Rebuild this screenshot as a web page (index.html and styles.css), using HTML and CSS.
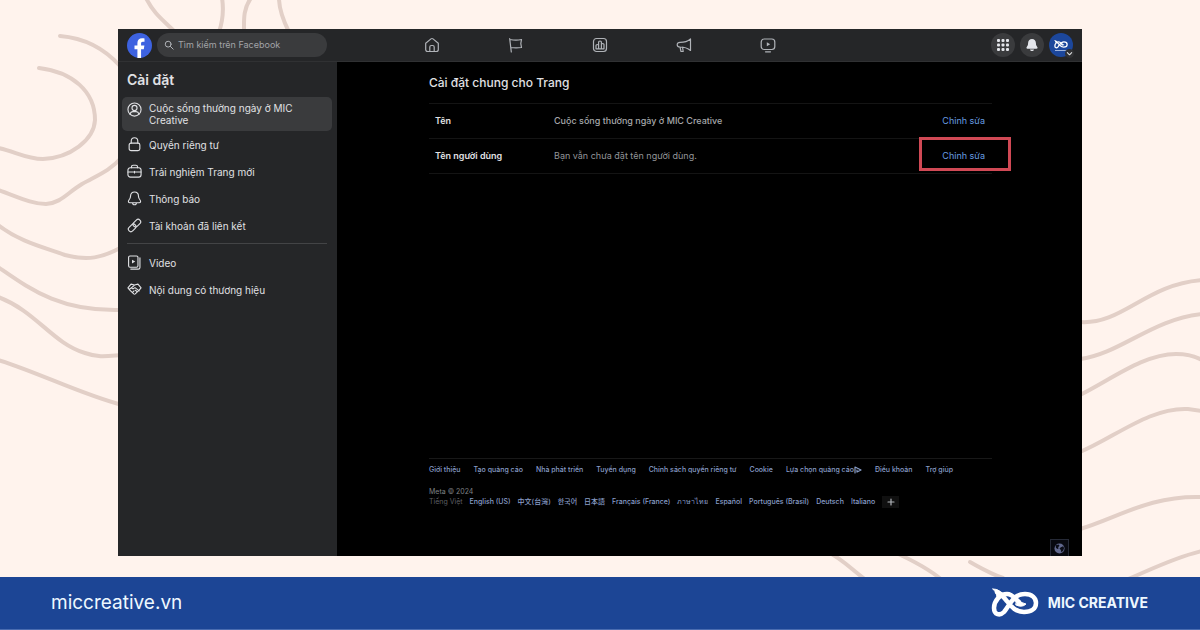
FILE: index.html
```html
<!DOCTYPE html>
<html lang="vi">
<head>
<meta charset="utf-8">
<meta name="viewport" content="width=device-width, initial-scale=1">
<title>Cài đặt chung cho Trang</title>
<link rel="stylesheet" href="styles.css">
</head>
<body>
<svg class="waves" viewBox="0 0 1200 630" preserveAspectRatio="xMidYMid slice" aria-hidden="true">
  <path d="M60 36C84 38 104 48 120 66"/>
  <path d="M39 68C72 72 95 91 95 120C94 140 70 158 43 159C26 159 14 151-2 148"/>
  <path d="M-2 190C16 196 31 204 46 204C61 203 67 193 82 184C98 175 110 171 122 157"/>
  <path d="M-2 225C20 242 43 247 65 255C88 261 102 258 122 247"/>
  <path d="M-2 267C30 289 60 312 122 310"/>
  <path d="M-2 297C36 311 52 343 85 353C99 358 108 356 122 355"/>
  <path d="M-2 360C40 373 80 394 122 405"/>
  <path d="M146-2C154 14 163 20 174 31M222-2C224 10 223 20 219 32M251-2C243 9 244 20 244 32M279-2C279 10 283 20 289 32"/>
  <path d="M1080 322C1122 325 1146 284 1202 280"/>
  <path d="M1080 359C1120 354 1152 319 1202 314"/>
  <path d="M1080 395C1112 379 1144 354 1176 354C1187 354 1195 356 1202 360"/>
  <path d="M1080 452C1114 438 1150 407 1188 409L1202 411"/>
  <path d="M1080 529C1115 519 1150 495 1202 497"/>
  <path d="M1126 580C1150 570 1175 557 1202 551"/>
  <path d="M828 552C842 559 850 568 866 580M894 552C914 561 929 569 942 580M970 562C981 568 989 573 1003 578"/>
</svg>

<div class="window">
  <header class="topbar">
    <div class="topbar-start">
      <a class="logo" href="#" aria-label="Facebook">
        <svg viewBox="0 0 24 24"><circle cx="12" cy="12" r="12" fill="#3d62e0"/><path d="M10 24v-8.500H7.200V12H10V9.600C10 6.500 11.700 5 14.500 5c1 0 1.800.1 2.300.2v3.100h-1.600c-1.300 0-1.700.7-1.700 1.700v2h3.200l-.6 3.500h-2.600V24z" fill="#fff"/></svg>
      </a>
      <label class="search">
        <svg class="line" viewBox="0 0 12 12"><circle cx="5" cy="5" r="3.500"/><path d="M7.700 7.700 11 11"/></svg>
        <input type="search" placeholder="Tìm kiếm trên Facebook" aria-label="Tìm kiếm trên Facebook">
      </label>
    </div>
    <nav class="tabs" aria-label="Chính">
      <a href="#" aria-label="Trang chủ"><svg class="line" viewBox="0 0 16 16"><path d="M1.700 6.300 7 1.900q1-.8 2 0l5.300 4.400v6.200q0 2-2 2H3.700q-2 0-2-2zM5.800 14.500V10q0-1.500 1.500-1.500h1.400q1.500 0 1.500 1.500v4.500"/></svg></a>
      <a href="#" aria-label="Trang"><svg class="line" viewBox="0 0 16 16"><path d="M1.700 1.700 3.300 15M2 2.500q6 1.200 11.500 0l-.7 4 .7 4q-5.500 .8-10.700 0"/></svg></a>
      <a href="#" aria-label="Thống kê"><svg class="line" viewBox="0 0 16 16"><rect x="1.500" y="1.500" width="13" height="13" rx="3"/><path d="M4 11.800V8.500q0-1 1.300-1t1.300 1v3.300zM6.600 11.800V5q0-1 1.400-1t1.400 1v6.800zM9.400 11.800V7.500q0-1 1.300-1t1.300 1v4.300z"/></svg></a>
      <a href="#" aria-label="Quảng cáo"><svg class="line" viewBox="0 0 16 16"><path d="M14.500 2v11.500C11 10.500 8 10 4 10Q1.200 10 1.200 7.700T4 5.400C8 5.400 11 5 14.500 2zM4 10l1 4.500h2.200L6.500 10"/></svg></a>
      <a href="#" aria-label="Video"><svg class="line" viewBox="0 0 16 16"><rect x="1.200" y="2" width="13.600" height="10.500" rx="3"/><path d="M5.500 14.800h5"/><path class="solid" d="m6.800 5.300 3.400 2-3.400 2z"/></svg></a>
    </nav>
    <div class="topbar-end">
      <button class="round" type="button" aria-label="Menu"><svg viewBox="0 0 12 12" fill="#e4e6eb"><rect width="3" height="3" rx="1"/><rect x="4.500" width="3" height="3" rx="1"/><rect x="9" width="3" height="3" rx="1"/><rect y="4.500" width="3" height="3" rx="1"/><rect x="4.500" y="4.500" width="3" height="3" rx="1"/><rect x="9" y="4.500" width="3" height="3" rx="1"/><rect y="9" width="3" height="3" rx="1"/><rect x="4.500" y="9" width="3" height="3" rx="1"/><rect x="9" y="9" width="3" height="3" rx="1"/></svg></button>
      <button class="round" type="button" aria-label="Thông báo"><svg viewBox="0 0 12 12" fill="#e4e6eb"><path d="M6 0C3.500 0 2.100 1.800 2.100 4L1.900 6 .6 8.200C.2 9 .6 9.700 1.500 9.700h9c.9 0 1.300-.7.9-1.500L10.100 6l-.2-2C9.900 1.800 8.500 0 6 0zM4 10.400h4C7.600 12.500 4.400 12.500 4 10.400z"/></svg></button>
      <button class="round avatar" type="button" aria-label="Tài khoản">
        <svg viewBox="0 0 48 30" class="knot"><use href="#knot"/></svg>
        <span class="avatar-line"></span>
        <span class="chevron"><svg class="line" viewBox="0 0 8 8"><path d="m1.500 3 2.500 2.500L6.500 3"/></svg></span>
      </button>
    </div>
  </header>

  <div class="body">
    <aside class="sidebar">
      <h1>Cài đặt</h1>
      <nav aria-label="Cài đặt">
        <ul class="menu">
          <li><a class="active" href="#"><svg class="line" viewBox="0 0 16 16"><circle cx="8" cy="8" r="7"/><circle cx="8" cy="6.300" r="2.700"/><path d="M3.200 13q.8-2.700 3-2.700h3.600q2.200 0 3 2.700"/></svg>Cuộc sống thường ngày ở MIC Creative</a></li>
          <li><a href="#"><svg class="line" viewBox="0 0 16 16"><rect x="2.300" y="6.500" width="11.400" height="8" rx="2"/><path d="M4.500 6.500V4.300a3.500 3.500 0 0 1 7 0v2.200"/></svg>Quyền riêng tư</a></li>
          <li><a href="#"><svg class="line" viewBox="0 0 16 16"><rect x="1" y="4" width="14" height="10" rx="2.500"/><path d="M4.800 4V3q0-1.700 1.700-1.700h3q1.700 0 1.700 1.700v1M1 8.500h14M8 7.800v1.700"/></svg>Trải nghiệm Trang mới</a></li>
          <li><a href="#"><svg class="line" viewBox="0 0 16 16"><path d="M8 1C5.300 1 3.800 3 3.800 5.200q0 2.300-1.700 4.400C1 11.200 1.400 12.500 3 12.500h10c1.600 0 2-1.300.9-2.900q-1.700-2.100-1.700-4.400C12.200 3 10.700 1 8 1zM6 12.500q0 2.200 2 2.200t2-2.200"/></svg>Thông báo</a></li>
          <li><a href="#"><svg class="line" viewBox="0 0 16 16"><rect x="-4.600" y="-2.700" width="9.200" height="5.400" rx="2.700" transform="translate(10.500 5.500) rotate(-45)"/><rect x="-4.600" y="-2.700" width="9.200" height="5.400" rx="2.700" transform="translate(5.500 10.500) rotate(-45)"/></svg>Tài khoản đã liên kết</a></li>
        </ul>
        <ul class="menu menu-more">
          <li><a href="#"><svg class="line" viewBox="0 0 16 16"><rect x="1.700" y="1" width="10" height="12" rx="1.500"/><path d="M13.800 3v10.200q0 1.800-1.800 1.800H4"/><path class="solid" d="m5.300 5 3.500 2-3.500 2z"/></svg>Video</a></li>
          <li><a href="#"><svg class="line" viewBox="0 0 16 16"><path d="m1 6.300 3.300-4L8 3.200l3.700-.9 3.300 4-2 2.400-4.200 4q-.8.700-1.600 0L3 8.700zM8 3.200 5 6q.3 1.800 2.300.8L8.500 6l4.500 3.500M3 7.500l1.500-1.300M9 8.800l2 1.800M6 11l1.500-1.500"/></svg>Nội dung có thương hiệu</a></li>
        </ul>
      </nav>
    </aside>

    <main class="main">
      <section>
        <h2>Cài đặt chung cho Trang</h2>
        <table class="settings">
          <tr><th scope="row">Tên</th><td class="strong">Cuộc sống thường ngày ở MIC Creative</td><td class="edit"><a href="#">Chỉnh sửa</a></td></tr>
          <tr><th scope="row">Tên người dùng</th><td>Bạn vẫn chưa đặt tên người dùng.</td><td class="edit"><a class="marked" href="#">Chỉnh sửa</a></td></tr>
        </table>
      </section>
      <footer class="legal">
        <nav class="links">
          <a href="#">Giới thiệu</a><a href="#">Tạo quảng cáo</a><a href="#">Nhà phát triển</a><a href="#">Tuyển dụng</a><a href="#">Chính sách quyền riêng tư</a><a href="#">Cookie</a><a href="#">Lựa chọn quảng cáo<svg class="line adchoice" viewBox="0 0 8 8"><path d="M1 7V1l6 3-4 2V4"/></svg></a><a href="#">Điều khoản</a><a href="#">Trợ giúp</a>
        </nav>
        <p>Meta © 2024</p>
        <div class="languages">
          <span>Tiếng Việt</span><a href="#">English (US)</a><a href="#" lang="zh-TW">中文(台灣)</a><a href="#" lang="ko">한국어</a><a href="#" lang="ja">日本語</a><a href="#">Français (France)</a><a href="#" lang="th">ภาษาไทย</a><a href="#">Español</a><a href="#">Português (Brasil)</a><a href="#">Deutsch</a><a href="#">Italiano</a><button type="button" aria-label="Thêm ngôn ngữ"><svg class="line" viewBox="0 0 8 8"><path d="M4 1v6M1 4h6"/></svg></button>
        </div>
      </footer>
      <button class="globe" type="button" aria-label="Ngôn ngữ"><svg viewBox="0 0 12 12"><circle cx="6" cy="6" r="5.500" fill="#62698f"/><path d="M2 2.500 5 1.500 6 3 4.500 4.500 5 6 3.500 6.500 2 5zM7.500 4.500 10 3.500l1 2-1 3-2 1.500-.5-2.500L6 6z" fill="#0b0d18"/></svg></button>
    </main>
  </div>
</div>

<footer class="brandbar">
  <a class="site" href="#">miccreative.vn</a>
  <div class="brand">
    <svg class="brand-knot" viewBox="0 0 48 30" aria-hidden="true">
      <g id="knot" fill="none" stroke="#fff" stroke-width="4.500" stroke-linecap="round" stroke-linejoin="round"><path d="M28 14C24 11 22 6 16 6C9 6 3 13 3 20C3 27 9 28 13 24C19 17 22 6 34 6C41 6 45 10 45 15C45 21 40 24 33 24C24 24 20 18 15 12C11 7 9 5 6 4"/><path d="M2 1Q8 1 11 6L6 9Q6 4 2 1zM26 11Q29 15 35 16Q31 20 25 17z" fill="#fff" stroke-width="1"/></g>
    </svg>
    <span>MIC CREATIVE</span>
  </div>
</footer>
</body>
</html>
```
FILE: styles.css
```css
* { box-sizing: border-box; }

body {
  margin: 0;
  min-height: 100vh;
  display: flex;
  flex-direction: column;
  background: #fff3ed;
  color: #e0e1e4;
  font-family: Inter, "Noto Sans", "Noto Sans CJK TC", "Noto Sans CJK KR", sans-serif;
  font-size: 10px;
  line-height: 12px;
}

a { color: inherit; text-decoration: none; }
button { padding: 0; border: 0; font: inherit; color: inherit; cursor: pointer; }
ul { list-style: none; margin: 0; padding: 0; }
svg { display: block; }

.line {
  fill: none;
  stroke: currentColor;
  stroke-width: 1.2;
  stroke-linecap: round;
  stroke-linejoin: round;
}
.line .solid { fill: currentColor; stroke: none; }

.waves {
  position: absolute;
  inset: 0;
  width: 100%;
  height: 100%;
  z-index: -1;
  fill: none;
  stroke: #e2cfc7;
  stroke-width: 4;
  stroke-linecap: round;
}

.window {
  flex: 1;
  display: flex;
  flex-direction: column;
  margin: 29px 118px 21px;
  background: #000;
}

.topbar {
  display: grid;
  grid-template-columns: 1fr auto 1fr;
  align-items: center;
  height: 33px;
  padding: 0 9px;
  background: #252628;
  border-bottom: 1px solid #303133;
}
.topbar-start { display: flex; align-items: center; gap: 5px; }
.logo svg { width: 25px; height: 25px; }
.search {
  display: flex;
  align-items: center;
  gap: 4px;
  width: 170px;
  height: 24px;
  padding: 0 7px;
  border-radius: 12px;
  background: #3a3b3d;
  color: #b0b3b8;
}
.search svg { width: 10px; height: 10px; flex: none; }
.search input {
  width: 100%;
  min-width: 0;
  padding: 0;
  border: 0;
  outline: 0;
  background: none;
  color: inherit;
  font: inherit;
  font-size: 9px;
}
.search input::placeholder { color: #a2a4a8; opacity: 1; }

.tabs { display: flex; gap: 68px; color: #b0b3b8; }
.tabs svg { width: 16px; height: 16px; }

.topbar-end { display: flex; justify-content: flex-end; gap: 5px; }
.round {
  position: relative;
  display: grid;
  place-items: center;
  align-content: center;
  width: 24px;
  height: 24px;
  border-radius: 50%;
  background: #3a3b3d;
}
.round > svg { width: 12px; height: 12px; }
.avatar { background: #1c479c; row-gap: 1px; }
.avatar > .knot { width: 14px; height: 9px; }
.avatar-line { width: 12px; height: 1px; background: #9fb4dc; }
.chevron {
  position: absolute;
  right: -1px;
  bottom: -1px;
  width: 9px;
  height: 9px;
  padding: 1px;
  border-radius: 50%;
  background: #303133;
}

.body { flex: 1; display: flex; }

.sidebar {
  flex: none;
  width: 219px;
  padding: 9px 5px 8px 4px;
  background: #252628;
}
.sidebar h1 {
  margin: 0 0 8px;
  padding-left: 5px;
  font-size: 14px;
  line-height: 18px;
  font-weight: 600;
}
.menu a {
  display: flex;
  align-items: center;
  gap: 7px;
  min-height: 27px;
  padding: 0 28px 0 5px;
  border-radius: 5px;
}
.menu svg { width: 15px; height: 15px; flex: none; }
.menu .active { min-height: 34px; padding-block: 5px; background: #3a3b3d; }
.menu .active svg { align-self: flex-start; }
.menu-more { margin: 4px 5px 0; padding-top: 5px; border-top: 1px solid #434446; }
.menu-more a { padding-left: 0; }

.main {
  position: relative;
  flex: 1;
  display: flex;
  flex-direction: column;
  justify-content: space-between;
  padding: 13px 90px 48px 92px;
}
.main h2 {
  margin: 0 0 12px;
  font-size: 12px;
  line-height: 16px;
  font-weight: 500;
}
.settings { width: 100%; border-collapse: collapse; font-size: 9px; color: #939598; }
.settings tr { height: 35px; border-top: 1px solid #141414; border-bottom: 1px solid #141414; }
.settings tr + tr { border-top-color: #070707; }
.settings th, .settings td { padding: 0; text-align: left; }
.settings th { width: 125px; padding-left: 6px; color: #e0e1e4; font-weight: 600; }
.settings .strong { color: #a6a8ab; font-weight: 500; }
.settings .edit { padding-right: 7px; text-align: right; color: #689ee0; }
.marked { position: relative; }
.marked::after {
  content: "";
  position: absolute;
  inset: -13px -26px -10px -23px;
  border: 3px solid #d04955;
}

.legal { padding-top: 5px; border-top: 1px solid #181818; font-size: 7px; color: #7f8184; }
.legal a { color: #899ec8; font-weight: 500; }
.links, .languages { display: flex; flex-wrap: wrap; align-items: center; }
.links { gap: 0 13px; }
.links a { display: flex; align-items: center; }
.adchoice { width: 8px; height: 8px; }
.legal p { margin: 12px 0 0; line-height: 8px; }
.languages { gap: 0 7px; white-space: nowrap; }
.languages span { color: #5d5f62; }
.languages button {
  display: grid;
  place-items: center;
  width: 17px;
  height: 12px;
  background: #101010;
  color: #b0b3b8;
}
.languages button svg { width: 8px; height: 8px; }

.globe {
  position: absolute;
  right: 13px;
  bottom: 0;
  display: grid;
  place-items: center;
  width: 19px;
  height: 17px;
  background: #080910;
  border: 1px solid #252936;
  border-bottom: 0;
}
.globe svg { width: 11px; height: 11px; }

.brandbar {
  display: flex;
  align-items: center;
  justify-content: space-between;
  height: 53px;
  padding: 0 52px 0 51px;
  background: #1c4595;
  border-bottom: 1px solid #4a6cb0;
  color: #eef8ff;
}
.site { font-size: 19px; line-height: 24px; }
.brand {
  display: flex;
  align-items: center;
  gap: 9px;
  font-size: 14px;
  line-height: 18px;
  font-weight: 700;
}
.brand-knot { width: 48px; height: 30px; }
```
